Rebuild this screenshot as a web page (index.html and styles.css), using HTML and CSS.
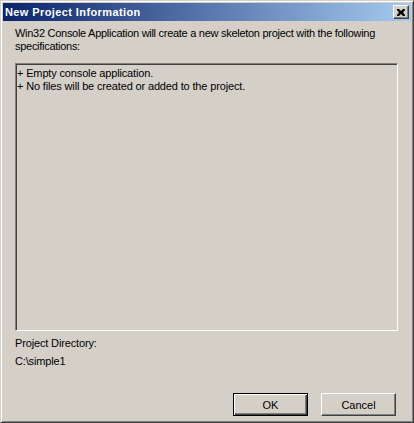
FILE: index.html
```html
<!DOCTYPE html>
<html>
<head>
<meta charset="utf-8">
<link rel="stylesheet" href="styles.css">
</head>
<body>
<div class="window">
  <div class="titlebar">
    <span class="title">New Project Information</span>
    <span class="close">
      <svg width="8" height="7" viewBox="0 0 8 7"><path d="M0 0h2l2 2 2-2h2v1L6 3.5 8 6v1H6L4 5 2 7H0V6l2-2.5L0 1z" fill="#000"/></svg>
    </span>
  </div>
  <div class="content">
    <p class="intro">Win32 Console Application will create a new skeleton project with the following specifications:</p>
    <div class="listbox">
      <div class="item">+ Empty console application.</div>
      <div class="item">+ No files will be created or added to the project.</div>
    </div>
    <div class="label">Project Directory:</div>
    <div class="dir">C:\simple1</div>
  </div>
  <div class="buttons">
    <button class="btn default">OK</button>
    <button class="btn">Cancel</button>
  </div>
</div>
</body>
</html>
```
FILE: styles.css
```css
html, body {
  margin: 0;
  padding: 0;
  background: #D4D0C8;
}
.window {
  width: 414px;
  height: 423px;
  box-sizing: border-box;
  background: #D4D0C8;
  border: 1px solid;
  border-color: #D4D0C8 #404040 #404040 #D4D0C8;
  box-shadow: inset 1px 1px #fff, inset -1px -1px #808080;
  padding: 2px;
  display: flex;
  flex-direction: column;
  font-family: "Liberation Sans", Arial, sans-serif;
  font-size: 11px;
  letter-spacing: -0.15px;
  color: #000;
}
.titlebar {
  height: 18px;
  background: linear-gradient(to right, #0A246A, #A6CAF0);
  display: flex;
  align-items: center;
  justify-content: space-between;
  padding: 0 2px 0 2px;
}
.title {
  color: #fff;
  font-weight: bold;
  font-size: 11px;
  letter-spacing: 0.4px;
}
.close {
  width: 16px;
  height: 14px;
  box-sizing: border-box;
  background: #D4D0C8;
  border: 1px solid;
  border-color: #fff #404040 #404040 #fff;
  box-shadow: inset -1px -1px #808080;
  display: flex;
  align-items: center;
  justify-content: center;
}
.close svg { display: block; margin-left: -1px; }
.content {
  padding: 6px 13px 0 12px;
}
.intro {
  margin: 0;
  line-height: 13px;
  letter-spacing: -0.28px;
}
.listbox {
  margin-top: 10px;
  height: 268px;
  box-sizing: border-box;
  border: 1px solid;
  border-color: #808080 #fff #fff #808080;
  box-shadow: inset 1px 1px #404040, inset -1px -1px #D4D0C8;
  padding: 3px 0 3px 0;
}
.item {
  line-height: 13px;
  padding-left: 1px;
}
.label {
  margin-top: 6px;
  line-height: 13px;
}
.dir {
  margin-top: 5px;
  line-height: 13px;
}
.buttons {
  margin-top: auto;
  display: flex;
  justify-content: flex-end;
  gap: 13px;
  padding: 0 15px 4px 0;
}
.btn {
  width: 75px;
  height: 23px;
  box-sizing: border-box;
  margin: 0;
  padding: 0;
  font-family: "Liberation Sans", Arial, sans-serif;
  font-size: 11px;
  color: #000;
  background: #D4D0C8;
  border: 1px solid;
  border-color: #fff #404040 #404040 #fff;
  box-shadow: inset -1px -1px #808080;
}
.btn.default {
  border: 1px solid #000;
  box-shadow: inset 1px 1px #fff, inset -1px -1px #404040, inset -2px -2px #808080;
}
```
